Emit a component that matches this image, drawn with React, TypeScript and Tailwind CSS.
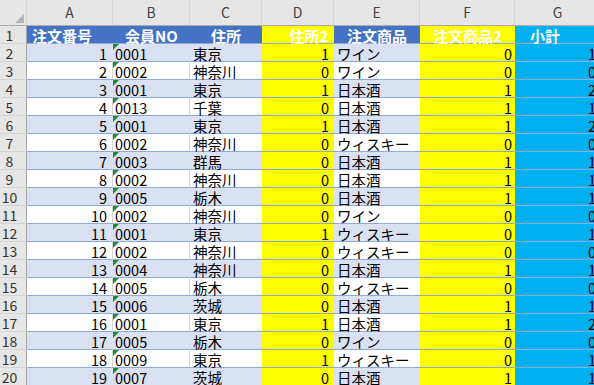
import React from 'react';

type Row = [number, string, string, number, string, number, number];

// 注文データ
const rows: Row[] = [
  [1, '0001', '東京', 1, 'ワイン', 0, 1],
  [2, '0002', '神奈川', 0, 'ワイン', 0, 0],
  [3, '0001', '東京', 1, '日本酒', 1, 2],
  [4, '0013', '千葉', 0, '日本酒', 1, 1],
  [5, '0001', '東京', 1, '日本酒', 1, 2],
  [6, '0002', '神奈川', 0, 'ウィスキー', 0, 0],
  [7, '0003', '群馬', 0, '日本酒', 1, 1],
  [8, '0002', '神奈川', 0, '日本酒', 1, 1],
  [9, '0005', '栃木', 0, '日本酒', 1, 1],
  [10, '0002', '神奈川', 0, 'ワイン', 0, 0],
  [11, '0001', '東京', 1, 'ウィスキー', 0, 1],
  [12, '0002', '神奈川', 0, 'ウィスキー', 0, 0],
  [13, '0004', '神奈川', 0, '日本酒', 1, 1],
  [14, '0005', '栃木', 0, 'ウィスキー', 0, 0],
  [15, '0006', '茨城', 0, '日本酒', 1, 1],
  [16, '0001', '東京', 1, '日本酒', 1, 2],
  [17, '0005', '栃木', 0, 'ワイン', 0, 0],
  [18, '0009', '東京', 1, 'ウィスキー', 0, 1],
  [19, '0007', '茨城', 0, '日本酒', 1, 1],
];

const RowHead: React.FC<{ n: number }> = ({ n }) => (
  <div className="w-[27px] shrink-0 h-[18px] bg-[#E6E6E6] border-r border-b border-r-[#A6A6A6] border-b-[#D4D4D4] text-[#333] text-[14px] font-normal leading-[17px] pt-[1px] pr-[7px] text-center">
    {n}
  </div>
);

const TextFlag: React.FC = () => (
  <svg className="absolute left-0 top-0" width="6" height="6" viewBox="0 0 6 6">
    <polygon points="0,0 6,0 0,6" fill="#1F8A36" />
  </svg>
);

const App: React.FC = () => {
  const cell = 'h-[18px] shrink-0 border-b border-[#8EA9DB] text-[14.5px] leading-[17px] pt-[1px] whitespace-nowrap';
  const head = 'h-[18px] shrink-0 border-b border-[#8EA9DB] text-[15px] font-bold text-white leading-[17px] pt-[1px] whitespace-nowrap';

  return (
    <div className="w-[594px] h-[385px] overflow-hidden bg-white text-black font-['Noto_Sans_CJK_JP',sans-serif]">
      {/* column letters */}
      <div className="flex h-[26px] bg-[#E6E6E6] border-b border-[#ABABAB] text-[#444] text-[14px] leading-[25px]">
        <div className="w-[27px] shrink-0 relative border-r border-[#D4D4D4]">
          <svg className="absolute left-[15px] top-[14px]" width="9" height="9" viewBox="0 0 9 9">
            <polygon points="9,0 9,9 0,9" fill="#B4B4B4" />
          </svg>
        </div>
        <div className="w-[86px] shrink-0 text-center border-r border-[#D4D4D4]">A</div>
        <div className="w-[77px] shrink-0 text-center border-r border-[#D4D4D4]">B</div>
        <div className="w-[72px] shrink-0 text-center border-r border-[#D4D4D4]">C</div>
        <div className="w-[72px] shrink-0 text-center border-r border-[#D4D4D4]">D</div>
        <div className="w-[86px] shrink-0 text-center border-r border-[#D4D4D4]">E</div>
        <div className="w-[95px] shrink-0 text-center border-r border-[#D4D4D4]">F</div>
        <div className="w-[85px] shrink-0 text-center">G</div>
      </div>

      {/* row 1: table header */}
      <div className="flex">
        <RowHead n={1} />
        <div className={`${head} w-[86px] bg-[#4472C4] pl-[5px]`}>注文番号</div>
        <div className={`${head} w-[77px] bg-[#4472C4] text-center`}>会員NO</div>
        <div className={`${head} w-[72px] bg-[#4472C4] text-center`}>住所</div>
        <div className={`${head} w-[72px] bg-[#FFFF00] text-right pr-[6px]`}>住所2</div>
        <div className={`${head} w-[86px] bg-[#4472C4] text-center`}>注文商品</div>
        <div className={`${head} w-[95px] bg-[#FFFF00] text-center`}>注文商品2</div>
        <div className={`${head} w-[85px] bg-[#00B0F0] pl-[15px]`}>小計</div>
      </div>

      {rows.map((r, i) => {
        const band = i % 2 === 0;
        const bg = band ? 'bg-[#D9E1F2]' : 'bg-white';
        const grid = band ? 'border-r border-r-[#D9E1F2]' : 'border-r border-r-[#D4D4D4]';
        return (
          <div key={i} className="flex">
            <RowHead n={i + 2} />
            <div className={`${cell} w-[86px] ${bg} ${grid} text-right pr-[5px]`}>{r[0]}</div>
            <div className={`${cell} w-[77px] ${bg} ${grid} pl-[2px] relative`}>
              <TextFlag />
              {r[1]}
            </div>
            <div className={`${cell} w-[72px] ${bg} pl-[3px]`}>{r[2]}</div>
            <div className={`${cell} w-[72px] bg-[#FFFF00] text-right pr-[5px]`}>{r[3]}</div>
            <div className={`${cell} w-[86px] ${bg} pl-[3px]`}>{r[4]}</div>
            <div className={`${cell} w-[95px] bg-[#FFFF00] text-right pr-[3px]`}>{r[5]}</div>
            <div className={`${cell} w-[85px] bg-[#00B0F0] text-right pr-[4px]`}>{r[6]}</div>
          </div>
        );
      })}
    </div>
  );
};

export default App;
